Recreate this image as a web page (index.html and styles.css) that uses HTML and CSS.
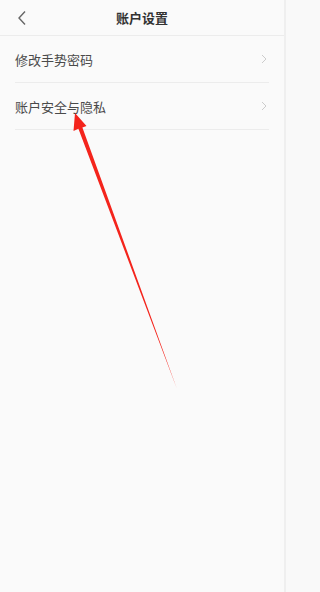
FILE: index.html
```html
<!DOCTYPE html>
<html lang="zh">
<head>
<meta charset="utf-8">
<link rel="stylesheet" href="styles.css">
</head>
<body>
<div class="page">
  <header class="bar">
    <svg class="back" width="12" height="16" viewBox="0 0 12 16"><path d="M9 1.5 L3 8 L9 14.5" fill="none" stroke="#666" stroke-width="1.4"/></svg>
    <div class="title">账户设置</div>
  </header>
  <div class="list">
    <div class="row"><span class="label">修改手势密码</span><svg class="chev" width="6" height="10" viewBox="0 0 6 10"><path d="M1 1 L5 5 L1 9" fill="none" stroke="#ccc" stroke-width="1"/></svg></div>
    <div class="row"><span class="label">账户安全与隐私</span><svg class="chev" width="6" height="10" viewBox="0 0 6 10"><path d="M1 1 L5 5 L1 9" fill="none" stroke="#ccc" stroke-width="1"/></svg></div>
  </div>
  <svg class="arrow" width="286" height="592" viewBox="0 0 286 592">
    <polygon points="75,113 86.5,126 82.4,127.5 177,389 78.4,128.8 73.5,131" fill="#f4241c"/>
  </svg>
</div>
</body>
</html>
```
FILE: styles.css
```css
html, body { margin: 0; padding: 0; }
body {
  background: #f9f9f9;
  font-family: "Noto Sans CJK SC", "Noto Sans", sans-serif;
}
.page {
  position: relative;
  width: 286px;
  height: 592px;
  background: #fafafa;
  border-right: 2px solid #efefef;
  box-sizing: border-box;
  overflow: hidden;
}
.bar {
  height: 36px;
  border-bottom: 1px solid #ececec;
  display: flex;
  align-items: center;
  justify-content: center;
  position: relative;
  box-sizing: border-box;
}
.back { position: absolute; left: 16px; top: 10px; }
.title {
  font-size: 13px;
  font-weight: 600;
  color: #333;
  line-height: 1;
}
.list { width: 254px; padding: 0 0 0 15px; }
.row {
  height: 47px;
  border-bottom: 1px solid #ececec;
  display: flex;
  align-items: center;
  justify-content: space-between;
  box-sizing: border-box;
  padding-right: 2px;
}
.label {
  font-size: 13px;
  color: #4a4a4a;
  line-height: 1;
}
.arrow { position: absolute; left: 0; top: 0; }
```
